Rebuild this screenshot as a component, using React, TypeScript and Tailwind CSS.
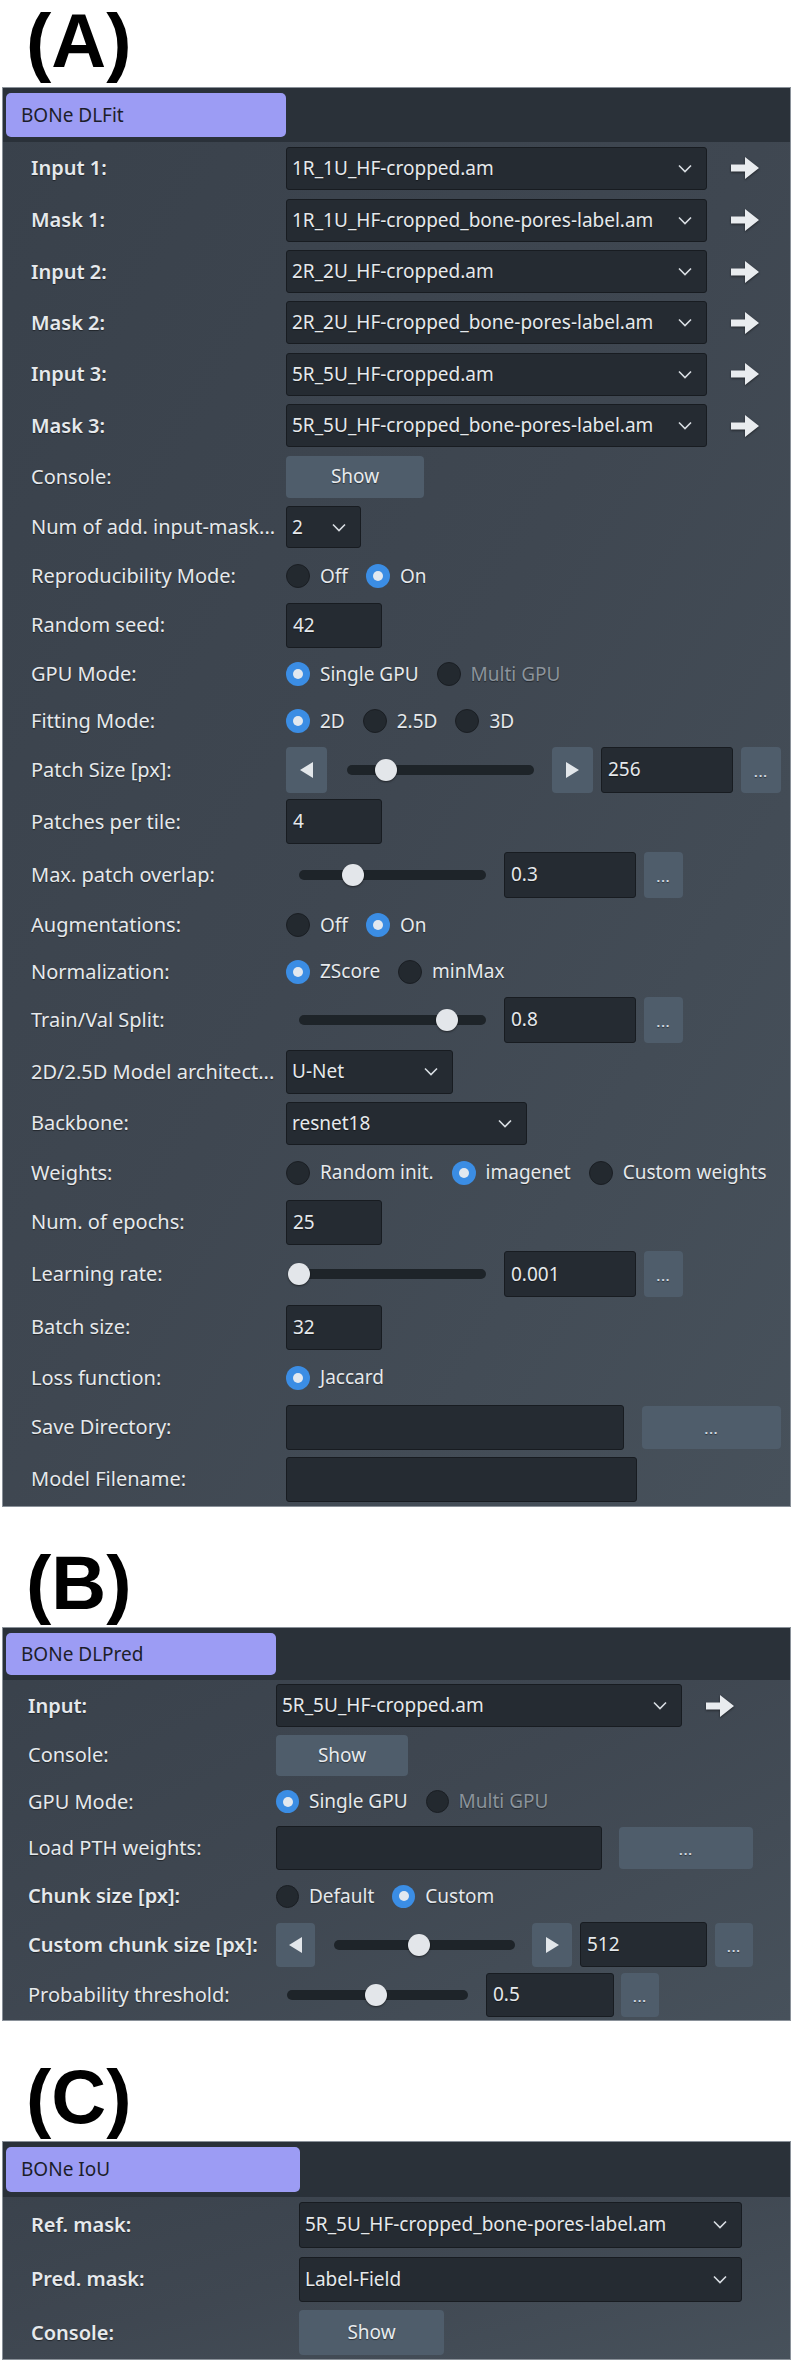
import type { ReactNode } from "react";

const field = "rounded-[3px] border border-[#181c21] bg-[#252b32]";
const btn = "rounded-[4px] bg-[#4f5d6b]";

function Chevron() {
  return (
    <svg width="14" height="9" viewBox="0 0 14 9" className="shrink-0">
      <polyline points="1,1.5 7,7.5 13,1.5" fill="none" stroke="#d9dee3" strokeWidth="1.6" />
    </svg>
  );
}

function ArrowRight() {
  return (
    <svg width="28" height="22" viewBox="0 0 28 22" className="ml-[24px] shrink-0 drop-shadow-[0_1px_1px_rgba(0,0,0,0.5)]">
      <path d="M0 7.5H14V0L28 11L14 22V14.5H0Z" fill="#e9ecef" />
    </svg>
  );
}

function Combo({ value, w, h = "h-[43px]" }: { value: string; w: string; h?: string }) {
  return (
    <div className={`flex ${w} ${h} items-center justify-between pl-[5px] pr-[14px] ${field}`}>
      <span className="whitespace-nowrap">{value}</span>
      <Chevron />
    </div>
  );
}

function TextBox({ value = "", w, h = "h-[45px]", ml = "" }: { value?: string; w: string; h?: string; ml?: string }) {
  return (
    <div className={`flex ${w} ${h} ${ml} items-center pl-[6px] ${field}`}>
      {value}
    </div>
  );
}

function ShowButton({ w, h }: { w: string; h: string }) {
  return <div className={`flex ${w} ${h} items-center justify-center ${btn} text-[#e8ebee]`}>Show</div>;
}

function Dots({ w, h = "h-[46px]", ml = "ml-[8px]" }: { w: string; h?: string; ml?: string }) {
  return (
    <div className={`flex ${w} ${h} ${ml} items-center justify-center ${btn} pt-[6px] text-[13px] font-bold tracking-[1px] text-[#d5dbe1]`}>
      ...
    </div>
  );
}

function Step({ dir, w, h, ml = "" }: { dir: "left" | "right"; w: string; h: string; ml?: string }) {
  return (
    <div className={`flex ${w} ${h} ${ml} items-center justify-center ${btn}`}>
      <svg width="13" height="16" viewBox="0 0 13 16">
        {dir === "left" ? <path d="M13 0V16L0 8Z" fill="#e2e6ea" /> : <path d="M0 0V16L13 8Z" fill="#e2e6ea" />}
      </svg>
    </div>
  );
}

function Slider({ w, pct, ml = "" }: { w: string; pct: number; ml?: string }) {
  return (
    <div className={`relative h-[22px] ${w} ${ml}`}>
      <div className="absolute inset-x-0 top-[6px] h-[10px] rounded-full bg-[#1e2429]" />
      <div
        className="absolute top-0 size-[22px] -translate-x-1/2 rounded-full bg-[#e3e6ea] shadow-[0_1px_2px_rgba(0,0,0,0.5)]"
        style={{ left: `${pct}%` }}
      />
    </div>
  );
}

type Opt = { label: string; on?: boolean; dim?: boolean };

function Radios({ items, size = "size-[24px]" }: { items: Opt[]; size?: string }) {
  return (
    <div className="flex items-center gap-[18px]">
      {items.map((o) => (
        <div key={o.label} className="flex items-center gap-[10px]">
          {o.on ? (
            <span className={`flex ${size} items-center justify-center rounded-full bg-[#3b8de4]`}>
              <span className="size-[10px] rounded-full bg-[#e2e8ef]" />
            </span>
          ) : (
            <span className={`${size} rounded-full border border-[#1a1e23] bg-[#23292f]`} />
          )}
          <span className={o.dim ? "text-[#8c949c]" : ""}>{o.label}</span>
        </div>
      ))}
    </div>
  );
}

function Row({ label, h, lw, strong, children }: { label: string; h: string; lw: string; strong?: boolean; children?: ReactNode }) {
  return (
    <div className={`flex ${h} items-center`}>
      <div className={`${lw} shrink-0 overflow-hidden whitespace-nowrap text-[20px] ${strong ? "font-semibold" : ""}`}>
        {label}
      </div>
      <div className="flex items-center">{children}</div>
    </div>
  );
}

function Panel({ title, head, tab, children }: { title: string; head: string; tab: string; children: ReactNode }) {
  return (
    <div className="border border-[#8a9199] bg-linear-to-br from-[#39414b] via-[#3f4751] to-[#47515b] text-[19px] text-[#e6e9ec] [text-shadow:0_1px_1px_rgba(0,0,0,0.45)]">
      <div className={`flex ${head} items-center bg-[#2a3139] px-[3px]`}>
        <div className={`flex ${tab} items-center rounded-[5px] bg-[#9c9cf4] pl-[15px] text-[#1c1e2a] [text-shadow:none]`}>
          {title}
        </div>
      </div>
      {children}
    </div>
  );
}

function Letter({ text, h, pt }: { text: string; h: string; pt: string }) {
  return (
    <div className={`${h} ${pt} pl-[24px] font-['Liberation_Sans',Arial,sans-serif] text-[76px] font-bold leading-none text-black`}>
      {text}
    </div>
  );
}

const lwA = "w-[283px] pl-[28px]";
const lwB = "w-[273px] pl-[25px]";
const lwC = "w-[296px] pl-[28px]";

function FitPanel() {
  return (
    <Panel title="BONe DLFit" head="h-[54px]" tab="h-[44px] w-[280px]">
      <Row label="Input 1:" h="h-[52px]" lw={lwA} strong>
        <Combo value="1R_1U_HF-cropped.am" w="w-[421px]" />
        <ArrowRight />
      </Row>
      <Row label="Mask 1:" h="h-[52px]" lw={lwA} strong>
        <Combo value="1R_1U_HF-cropped_bone-pores-label.am" w="w-[421px]" />
        <ArrowRight />
      </Row>
      <Row label="Input 2:" h="h-[51px]" lw={lwA} strong>
        <Combo value="2R_2U_HF-cropped.am" w="w-[421px]" />
        <ArrowRight />
      </Row>
      <Row label="Mask 2:" h="h-[51px]" lw={lwA} strong>
        <Combo value="2R_2U_HF-cropped_bone-pores-label.am" w="w-[421px]" />
        <ArrowRight />
      </Row>
      <Row label="Input 3:" h="h-[52px]" lw={lwA} strong>
        <Combo value="5R_5U_HF-cropped.am" w="w-[421px]" />
        <ArrowRight />
      </Row>
      <Row label="Mask 3:" h="h-[51px]" lw={lwA} strong>
        <Combo value="5R_5U_HF-cropped_bone-pores-label.am" w="w-[421px]" />
        <ArrowRight />
      </Row>
      <Row label="Console:" h="h-[51px]" lw={lwA}>
        <ShowButton w="w-[138px]" h="h-[42px]" />
      </Row>
      <Row label="Num of add. input-mask..." h="h-[50px]" lw={lwA}>
        <Combo value="2" w="w-[75px]" h="h-[42px]" />
      </Row>
      <Row label="Reproducibility Mode:" h="h-[48px]" lw={lwA}>
        <Radios items={[{ label: "Off" }, { label: "On", on: true }]} />
      </Row>
      <Row label="Random seed:" h="h-[50px]" lw={lwA}>
        <TextBox value="42" w="w-[96px]" />
      </Row>
      <Row label="GPU Mode:" h="h-[48px]" lw={lwA}>
        <Radios items={[{ label: "Single GPU", on: true }, { label: "Multi GPU", dim: true }]} />
      </Row>
      <Row label="Fitting Mode:" h="h-[46px]" lw={lwA}>
        <Radios items={[{ label: "2D", on: true }, { label: "2.5D" }, { label: "3D" }]} />
      </Row>
      <Row label="Patch Size [px]:" h="h-[51px]" lw={lwA}>
        <Step dir="left" w="w-[41px]" h="h-[46px]" />
        <Slider w="w-[187px]" pct={21} ml="ml-[20px]" />
        <Step dir="right" w="w-[41px]" h="h-[46px]" ml="ml-[18px]" />
        <TextBox value="256" w="w-[132px]" h="h-[46px]" ml="ml-[8px]" />
        <Dots w="w-[40px]" />
      </Row>
      <Row label="Patches per tile:" h="h-[53px]" lw={lwA}>
        <TextBox value="4" w="w-[96px]" />
      </Row>
      <Row label="Max. patch overlap:" h="h-[53px]" lw={lwA}>
        <Slider w="w-[187px]" pct={29} ml="ml-[13px]" />
        <TextBox value="0.3" w="w-[132px]" h="h-[46px]" ml="ml-[18px]" />
        <Dots w="w-[39px]" />
      </Row>
      <Row label="Augmentations:" h="h-[48px]" lw={lwA}>
        <Radios items={[{ label: "Off" }, { label: "On", on: true }]} />
      </Row>
      <Row label="Normalization:" h="h-[45px]" lw={lwA}>
        <Radios items={[{ label: "ZScore", on: true }, { label: "minMax" }]} />
      </Row>
      <Row label="Train/Val Split:" h="h-[51px]" lw={lwA}>
        <Slider w="w-[187px]" pct={79} ml="ml-[13px]" />
        <TextBox value="0.8" w="w-[132px]" h="h-[46px]" ml="ml-[18px]" />
        <Dots w="w-[39px]" />
      </Row>
      <Row label="2D/2.5D Model architect..." h="h-[53px]" lw={lwA}>
        <Combo value="U-Net" w="w-[167px]" h="h-[44px]" />
      </Row>
      <Row label="Backbone:" h="h-[50px]" lw={lwA}>
        <Combo value="resnet18" w="w-[241px]" h="h-[43px]" />
      </Row>
      <Row label="Weights:" h="h-[49px]" lw={lwA}>
        <Radios items={[{ label: "Random init." }, { label: "imagenet", on: true }, { label: "Custom weights" }]} />
      </Row>
      <Row label="Num. of epochs:" h="h-[50px]" lw={lwA}>
        <TextBox value="25" w="w-[96px]" />
      </Row>
      <Row label="Learning rate:" h="h-[54px]" lw={lwA}>
        <Slider w="w-[187px]" pct={0} ml="ml-[13px]" />
        <TextBox value="0.001" w="w-[132px]" h="h-[46px]" ml="ml-[18px]" />
        <Dots w="w-[39px]" />
      </Row>
      <Row label="Batch size:" h="h-[52px]" lw={lwA}>
        <TextBox value="32" w="w-[96px]" />
      </Row>
      <Row label="Loss function:" h="h-[49px]" lw={lwA}>
        <Radios items={[{ label: "Jaccard", on: true }]} />
      </Row>
      <Row label="Save Directory:" h="h-[50px]" lw={lwA}>
        <TextBox w="w-[338px]" />
        <Dots w="w-[139px]" h="h-[43px]" ml="ml-[18px]" />
      </Row>
      <Row label="Model Filename:" h="h-[54px]" lw={lwA}>
        <TextBox w="w-[351px]" />
      </Row>
    </Panel>
  );
}

function PredPanel() {
  return (
    <Panel title="BONe DLPred" head="h-[52px]" tab="h-[42px] w-[270px]">
      <Row label="Input:" h="h-[51px]" lw={lwB} strong>
        <Combo value="5R_5U_HF-cropped.am" w="w-[406px]" />
        <ArrowRight />
      </Row>
      <Row label="Console:" h="h-[48px]" lw={lwB}>
        <ShowButton w="w-[132px]" h="h-[41px]" />
      </Row>
      <Row label="GPU Mode:" h="h-[45px]" lw={lwB}>
        <Radios size="size-[23px]" items={[{ label: "Single GPU", on: true }, { label: "Multi GPU", dim: true }]} />
      </Row>
      <Row label="Load PTH weights:" h="h-[48px]" lw={lwB}>
        <TextBox w="w-[326px]" h="h-[44px]" />
        <Dots w="w-[134px]" h="h-[42px]" ml="ml-[17px]" />
      </Row>
      <Row label="Chunk size [px]:" h="h-[48px]" lw={lwB} strong>
        <Radios size="size-[23px]" items={[{ label: "Default" }, { label: "Custom", on: true }]} />
      </Row>
      <Row label="Custom chunk size [px]:" h="h-[49px]" lw={lwB} strong>
        <Step dir="left" w="w-[39px]" h="h-[44px]" />
        <Slider w="w-[181px]" pct={47} ml="ml-[19px]" />
        <Step dir="right" w="w-[40px]" h="h-[44px]" ml="ml-[17px]" />
        <TextBox value="512" w="w-[127px]" h="h-[45px]" ml="ml-[8px]" />
        <Dots w="w-[38px]" h="h-[44px]" />
      </Row>
      <Row label="Probability threshold:" h="h-[51px]" lw={lwB}>
        <Slider w="w-[181px]" pct={49} ml="ml-[11px]" />
        <TextBox value="0.5" w="w-[128px]" h="h-[44px]" ml="ml-[18px]" />
        <Dots w="w-[38px]" h="h-[44px]" ml="ml-[7px]" />
      </Row>
    </Panel>
  );
}

function IoUPanel() {
  return (
    <Panel title="BONe IoU" head="h-[55px]" tab="h-[45px] w-[294px]">
      <Row label="Ref. mask:" h="h-[55px]" lw={lwC} strong>
        <Combo value="5R_5U_HF-cropped_bone-pores-label.am" w="w-[443px]" h="h-[46px]" />
      </Row>
      <Row label="Pred. mask:" h="h-[54px]" lw={lwC} strong>
        <Combo value="Label-Field" w="w-[443px]" h="h-[45px]" />
      </Row>
      <Row label="Console:" h="h-[53px]" lw={lwC} strong>
        <ShowButton w="w-[145px]" h="h-[45px]" />
      </Row>
    </Panel>
  );
}

export default function App() {
  return (
    <div className="min-h-screen w-[796px] bg-white font-['Noto_Sans',sans-serif]">
      <div className="w-[791px] pl-[2px]">
        <Letter text="(A)" h="h-[87px]" pt="pt-[3px]" />
        <FitPanel />
        <Letter text="(B)" h="h-[120px]" pt="pt-[38px]" />
        <PredPanel />
        <Letter text="(C)" h="h-[120px]" pt="pt-[38px]" />
        <IoUPanel />
      </div>
    </div>
  );
}
